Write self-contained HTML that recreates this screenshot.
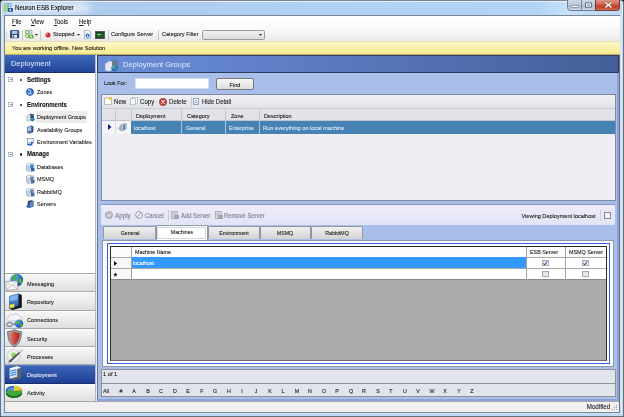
<!DOCTYPE html>
<html><head><meta charset="utf-8"><title>Neuron ESB Explorer</title>
<style>
html,body{margin:0;padding:0;}
body{width:624px;height:417px;overflow:hidden;background:#111;font-family:"Liberation Sans",sans-serif;font-size:6.1px;color:#1a1a1a;position:relative;}
.a{position:absolute;box-sizing:border-box;}
.t,.r,.c{-webkit-text-stroke:.1px currentColor;}
.t{position:absolute;white-space:nowrap;line-height:8px;height:8px;transform-origin:0 50%;}
.r{position:absolute;white-space:nowrap;line-height:8px;height:8px;transform-origin:100% 50%;}
.c{position:absolute;white-space:nowrap;line-height:8px;height:8px;width:100px;text-align:center;transform-origin:50% 50%;}
svg{position:absolute;overflow:visible;}
</style></head><body><div id="w" style="position:absolute;left:0;top:0;width:624px;height:417px;will-change:transform;">
<svg width="0" height="0" style="left:0;top:0"><defs><radialGradient id="gl" cx=".35" cy=".3" r=".8"><stop offset="0" stop-color="#7db8f4"/><stop offset=".55" stop-color="#2a6fd2"/><stop offset="1" stop-color="#123a8a"/></radialGradient></defs></svg>
<div class="a" style="left:0px;top:0px;width:624px;height:417px;background:linear-gradient(90deg,#b9d4f1 0,#adcbec 17%,#b1d2f3 50%,#b3d4f5 86%,#c6e0fa 91%,#bfdaf6 100%);border:1px solid #6a7078;border-top-color:#80848a;border-radius:3px 3px 1.5px 1.5px;"></div>
<div class="a" style="left:1px;top:1px;width:622px;height:415px;border:1px solid rgba(235,245,255,.85);border-radius:2.5px 2.5px 1px 1px;"></div>
<div class="a" style="left:1px;top:16px;width:3px;height:397px;background:linear-gradient(90deg,#c4dcf5,#dcebfb 50%,#b9d2ee);"></div>
<div class="a" style="left:620px;top:16px;width:3px;height:397px;background:linear-gradient(90deg,#c4dcf5,#e0eefc 50%,#b4cbe6);"></div>
<div class="a" style="left:1px;top:413px;width:622px;height:3px;background:linear-gradient(#c9e0f8,#bdd8f4);"></div>
<div class="a" style="left:6px;top:2.5px;width:84px;height:10.5px;background:rgba(255,255,255,.62);border-radius:5px;filter:blur(3.5px);"></div>
<svg style="left:0;top:0" width="624" height="417" viewBox="0 0 624 417"><circle cx="6.300" cy="5.700" r="1.700" fill="none" stroke="#8ccc58" stroke-width="1.300"/><circle cx="6" cy="9.400" r="1.600" fill="none" stroke="#8ccc58" stroke-width="1.300"/><circle cx="9.500" cy="5.200" r="1.600" fill="none" stroke="#7ea6e6" stroke-width="1.200"/><rect x="7.900" y="8" width="5" height="3.800" fill="#1f5a96"/><rect x="9.500" y="8.800" width="1.500" height="2.400" fill="#c9d8ea"/></svg>
<div class="t" style="left:15px;top:3.60px;font-size:6.6px;color:#000;transform:scaleX(0.93);">Neuron ESB Explorer</div>
<div class="a" style="left:566.9px;top:-1px;width:53.6px;height:11.6px;border:1px solid #6f7b8e;border-radius:0 0 3.5px 3.5px;background:linear-gradient(#cbd7e5 0,#bccadc 45%,#a9b9cf 50%,#b9c8db 85%,#d5e0ec 100%);"></div>
<div class="a" style="left:581px;top:0px;width:1px;height:10px;background:#7a8698;"></div>
<div class="a" style="left:594.6px;top:-1px;width:25.9px;height:11.6px;border:1px solid #7a3a34;border-radius:0 0 3.5px 0;background:linear-gradient(#dc9484 0,#cf6a55 42%,#c3452c 50%,#c4482f 80%,#d67a60 100%);"></div>
<svg style="left:0;top:0" width="624" height="417" viewBox="0 0 624 417"><rect x="571.400" y="5.400" width="6.800" height="2.100" rx=".5" fill="#fff" stroke="#5a6476" stroke-width=".6"/><rect x="585.600" y="2.900" width="6" height="4.300" fill="#eef2f7" stroke="#4e5868" stroke-width=".8"/><rect x="587.300" y="4.400" width="2.600" height="1.500" fill="#8a96a8"/><path d="M605.700 2.800l5.400 4.300M611.100 2.800l-5.400 4.300" stroke="#5a2620" stroke-width="2.400" stroke-linecap="round" opacity=".55"/><path d="M605.700 2.800l5.400 4.300M611.100 2.800l-5.400 4.300" stroke="#fff" stroke-width="1.400" stroke-linecap="round"/></svg>
<div class="a" style="left:3.6px;top:15px;width:616.6px;height:398.4px;background:#f0f0f0;border:1px solid #7c8794;border-right-color:#6c727c;"></div>
<div class="a" style="left:5px;top:16px;width:614.5px;height:25px;background:linear-gradient(#ffffff 0,#fbfbfb 45%,#f1f1f1 80%,#e8e8e8 100%);"></div>
<div class="t" style="left:12px;top:17.70px;font-size:6.3px;color:#1a1a1a;transform:scaleX(0.95);"><u>F</u>ile</div>
<div class="t" style="left:31px;top:17.70px;font-size:6.3px;color:#1a1a1a;transform:scaleX(0.95);"><u>V</u>iew</div>
<div class="t" style="left:54px;top:17.70px;font-size:6.3px;color:#1a1a1a;transform:scaleX(0.95);"><u>T</u>ools</div>
<div class="t" style="left:79px;top:17.70px;font-size:6.3px;color:#1a1a1a;transform:scaleX(0.95);"><u>H</u>elp</div>
<div class="a" style="left:6.3px;top:30px;width:1px;height:1px;background:#b4bcc6;"></div>
<div class="a" style="left:6.3px;top:32px;width:1px;height:1px;background:#b4bcc6;"></div>
<div class="a" style="left:6.3px;top:34px;width:1px;height:1px;background:#b4bcc6;"></div>
<div class="a" style="left:6.3px;top:36px;width:1px;height:1px;background:#b4bcc6;"></div>
<div class="a" style="left:6.3px;top:38px;width:1px;height:1px;background:#b4bcc6;"></div>
<svg style="left:10px;top:29.8px" width="9.2" height="8.4" viewBox="0 0 9.2 8.4"><rect x=".4" y=".4" width="8.400" height="7.600" rx=".8" fill="#24457c" stroke="#162c54" stroke-width=".6"/><rect x="1.800" y=".9" width="5.600" height="3.200" fill="#a9c4e6"/><rect x="2.200" y="5" width="4.800" height="2.800" fill="#e9edf3"/><rect x="2.800" y="5.600" width="1.400" height="1.800" fill="#24457c"/></svg>
<div class="a" style="left:21.5px;top:29.5px;width:1px;height:10px;background:#c8c8c8;"></div>
<svg style="left:0;top:0" width="624" height="417" viewBox="0 0 624 417"><circle cx="27.300" cy="32.200" r="1.700" fill="none" stroke="#86c450" stroke-width="1.300"/><circle cx="27" cy="36" r="1.500" fill="none" stroke="#86c450" stroke-width="1.200"/><circle cx="30.400" cy="31.800" r="1.600" fill="none" stroke="#9ab4d8" stroke-width="1.200"/><rect x="28.600" y="34.600" width="4.800" height="3.800" fill="#5fa83c"/><rect x="30.200" y="35.400" width="1.500" height="2.200" fill="#e4f2dc"/></svg>
<svg style="left:34.5px;top:34px" width="3" height="2" viewBox="0 0 3 2"><path d="M0 0h3L1.5 1.8z" fill="#222"/></svg>
<div class="a" style="left:39.5px;top:29.5px;width:1px;height:10px;background:#c8c8c8;"></div>
<svg style="left:44.5px;top:31.5px" width="6" height="6" viewBox="0 0 6 6"><circle cx="3" cy="3" r="2.5" fill="#d32a2a"/><circle cx="2.3" cy="2.2" r=".9" fill="#f08a80"/></svg>
<div class="t" style="left:53px;top:30.40px;font-size:6.2px;color:#1a1a1a;transform:scaleX(0.93);">Stopped</div>
<svg style="left:76.5px;top:34px" width="3" height="2" viewBox="0 0 3 2"><path d="M0 0h3L1.5 1.8z" fill="#222"/></svg>
<svg style="left:84px;top:30px" width="7" height="9" viewBox="0 0 7 9"><path d="M.4.4h4.2l2 2v6.2H.4z" fill="#f4f8fc" stroke="#7c8fa8" stroke-width=".6"/><circle cx="3.6" cy="5.6" r="2.1" fill="#2d6fc0"/><rect x="3.2" y="4.8" width=".9" height="2" fill="#fff"/></svg>
<svg style="left:94.5px;top:30.5px" width="10" height="8" viewBox="0 0 10 8"><rect x=".3" y=".3" width="9.4" height="7.4" fill="#1c2a1c" stroke="#555" stroke-width=".6"/><rect x="1.4" y="1.6" width="7.2" height="4.8" fill="#1f6a2a"/><rect x="2.4" y="3" width="3" height="1" fill="#9fe09f"/></svg>
<div class="a" style="left:108px;top:29.5px;width:1px;height:10px;background:#c8c8c8;"></div>
<div class="t" style="left:111px;top:30.40px;font-size:6.2px;color:#1a1a1a;transform:scaleX(0.9);">Configure Server</div>
<div class="a" style="left:157.5px;top:29.5px;width:1px;height:10px;background:#c8c8c8;"></div>
<div class="t" style="left:161.7px;top:30.40px;font-size:6.2px;color:#1a1a1a;transform:scaleX(0.9);">Category Filter</div>
<div class="a" style="left:202px;top:30px;width:62.5px;height:9.5px;background:linear-gradient(#f2f2f2,#dcdcdc);border:1px solid #9a9a9a;border-radius:1.5px;"></div>
<svg style="left:258.5px;top:34px" width="3" height="2" viewBox="0 0 3 2"><path d="M0 0h3L1.5 1.8z" fill="#111"/></svg>
<div class="a" style="left:5px;top:41px;width:614.5px;height:14px;background:linear-gradient(#fcf8cc,#f9f0a8 55%,#f4e88c);border-top:1px solid #e6e0b4;border-bottom:1px solid #b4ac68;"></div>
<div class="t" style="left:12px;top:43.80px;font-size:5.95px;color:#1a1a1a;transform:scaleX(0.95);">You are working offline. New Solution</div>
<div class="a" style="left:5px;top:55px;width:90px;height:219px;background:#fff;border-bottom:1px solid #a6a6a6;"></div>
<div class="a" style="left:5px;top:55px;width:90px;height:18px;background:linear-gradient(#3f68bb,#2f57a9 50%,#22439a);border-bottom:1px solid #182f6c;"></div>
<div class="t" style="left:11px;top:59.80px;font-size:8.0px;color:#e8eefc;transform:scaleX(0.93);-webkit-text-stroke:0;">Deployment</div>
<div class="a" style="left:8px;top:77.2px;width:5px;height:5px;border:1px solid #b4bccb;background:#fdfdfd;"></div>
<div class="a" style="left:9.5px;top:79.3px;width:2px;height:0.9px;background:#7b8aa8;"></div>
<div class="a" style="left:19.5px;top:78.7px;width:2.2px;height:2.2px;background:#222;border-radius:1.1px;"></div>
<div class="t" style="left:26.8px;top:75.70px;font-size:6.3px;color:#111;transform:scaleX(0.95);font-weight:bold;">Settings</div>
<div class="a" style="left:8px;top:102.0px;width:5px;height:5px;border:1px solid #b4bccb;background:#fdfdfd;"></div>
<div class="a" style="left:9.5px;top:104.1px;width:2px;height:0.9px;background:#7b8aa8;"></div>
<div class="a" style="left:19.5px;top:103.5px;width:2.2px;height:2.2px;background:#222;border-radius:1.1px;"></div>
<div class="t" style="left:26.8px;top:100.50px;font-size:6.3px;color:#111;transform:scaleX(0.95);font-weight:bold;">Environments</div>
<div class="a" style="left:8px;top:151.9px;width:5px;height:5px;border:1px solid #b4bccb;background:#fdfdfd;"></div>
<div class="a" style="left:9.5px;top:154.0px;width:2px;height:0.9px;background:#7b8aa8;"></div>
<div class="a" style="left:19.5px;top:153.4px;width:2.2px;height:2.2px;background:#222;border-radius:1.1px;"></div>
<div class="t" style="left:26.8px;top:150.40px;font-size:6.3px;color:#111;transform:scaleX(0.95);font-weight:bold;">Manage</div>
<div class="a" style="left:36px;top:110.8px;width:51px;height:12px;background:#ececec;"></div>
<svg style="left:26.3px;top:88.1px" width="8" height="8" viewBox="0 0 8 8"><circle cx="4" cy="4" r="3.6" fill="#2f6fc4" stroke="#1b3f80" stroke-width=".5"/><path d="M2 2.5c1-.8 2-.6 2.6.2.4.8-.4 1.4-.2 2.2.2.8 1 .8 1.4 1.6" stroke="#dff0ff" stroke-width="1" fill="none"/><circle cx="2.8" cy="5.4" r=".9" fill="#cfe6ff"/></svg>
<div class="t" style="left:36.9px;top:88.10px;font-size:6.1px;color:#1a1a1a;transform:scaleX(0.9);">Zones</div>
<svg style="left:26px;top:112.8px" width="9" height="9" viewBox="0 0 9 9"><path d="M.8 3l3-2 2.400.6v5L3.400 8.400.8 7.600z" fill="#d9dde4" stroke="#8a92a0" stroke-width=".4"/><path d="M4 .8l3.800.4v4.200L5 6.200z" fill="#1c2c58"/><path d="M4.600 1.600l2.600.3v1.200l-2.600-.2z" fill="#4a90e0"/><circle cx="6.500" cy="6.300" r="2.100" fill="#2a6fd2"/><path d="M5.200 5.600c.6-.8 1.600-.8 2-.2-.2.800-1 .6-1.300 1.300-.5.100-.8-.5-.7-1.100zM7 6.800c.5-.3 1.100 0 1.200.4-.3.600-.7.900-1.200 1z" fill="#4cb43a"/></svg>
<div class="t" style="left:36.9px;top:113.00px;font-size:6.1px;color:#1a1a1a;transform:scaleX(0.9);">Deployment Groups</div>
<svg style="left:26px;top:125.3px" width="9" height="9" viewBox="0 0 9 9"><path d="M1.400 2.200l4-1.400 1.800.8v5.200l-4 1.600L1.400 7.600z" fill="#355a94" stroke="#1d3560" stroke-width=".4"/><path d="M1.400 2.200l4-1.400v5.400l-4 1.400z" fill="#7c9cc8"/><path d="M2 3.200l2.800-1v.9L2 4.100zM2 4.800l2.800-1v.9L2 5.700z" fill="#dfe8f6"/><path d="M.6 7.200l3.400-1 2 .8-3.400 1.200z" fill="#55688c"/></svg>
<div class="t" style="left:36.9px;top:125.50px;font-size:6.1px;color:#1a1a1a;transform:scaleX(0.9);">Availability Groups</div>
<svg style="left:26px;top:138px" width="9" height="8" viewBox="0 0 9 8"><rect x="1.6" y=".6" width="5.6" height="4.4" fill="#eef3fa" stroke="#6d7f9a" stroke-width=".6"/><path d="M.6 5.8h5l1.4 1.6H2z" fill="#2a62c8"/><path d="M5 3.4l3 1.4-3 1.4z" fill="#2a62c8"/></svg>
<div class="t" style="left:36.9px;top:138.00px;font-size:6.1px;color:#1a1a1a;transform:scaleX(0.9);">Environment Variables</div>
<svg style="left:26px;top:162.6px" width="9" height="9" viewBox="0 0 9 9"><rect x=".5" y=".8" width="7.4" height="7.4" rx="1" fill="#eef2f8" stroke="#7f8da6" stroke-width=".6"/><rect x="1.3" y="2.200" width="2.400" height="5.200" fill="#b9c4d6"/><rect x="4.200" y="1.600" width="3.200" height="4" fill="#2f7fd8"/><rect x="5" y="5" width="3.400" height="3.200" fill="#2a62b2"/><rect x="1.300" y="1.300" width="2.400" height="1" fill="#fff"/></svg>
<div class="t" style="left:36.9px;top:162.90px;font-size:6.1px;color:#1a1a1a;transform:scaleX(0.9);">Databases</div>
<svg style="left:26px;top:175.0px" width="9" height="9" viewBox="0 0 9 9"><rect x=".5" y=".8" width="7.4" height="7.4" rx="1" fill="#eef2f8" stroke="#7f8da6" stroke-width=".6"/><rect x="1.3" y="2.200" width="2.400" height="5.200" fill="#b9c4d6"/><rect x="4.200" y="1.600" width="3.200" height="4" fill="#5f86b8"/><rect x="5" y="5" width="3.400" height="3.200" fill="#4a6a9a"/><rect x="1.300" y="1.300" width="2.400" height="1" fill="#fff"/></svg>
<div class="t" style="left:36.9px;top:175.30px;font-size:6.1px;color:#1a1a1a;transform:scaleX(0.9);">MSMQ</div>
<svg style="left:26px;top:187.5px" width="9" height="9" viewBox="0 0 9 9"><rect x=".5" y=".8" width="7.4" height="7.4" rx="1" fill="#eef2f8" stroke="#7f8da6" stroke-width=".6"/><rect x="1.3" y="2.200" width="2.400" height="5.200" fill="#b9c4d6"/><rect x="4.200" y="1.600" width="3.200" height="4" fill="#5f86b8"/><rect x="5" y="5" width="3.400" height="3.200" fill="#4a6a9a"/><rect x="1.300" y="1.300" width="2.400" height="1" fill="#fff"/></svg>
<div class="t" style="left:36.9px;top:187.80px;font-size:6.1px;color:#1a1a1a;transform:scaleX(0.9);">RabbitMQ</div>
<svg style="left:26px;top:200.2px" width="9" height="8" viewBox="0 0 9 8"><path d="M2 1.4l3.6-1 1.6.8v5.2l-3.6 1.2L2 6.8z" fill="#39465c" stroke="#1e2736" stroke-width=".5"/><path d="M3.6 2.2l3.6-1v5.2l-3.6 1.2z" fill="#5f86c8"/><circle cx="2.2" cy="6.2" r="1.6" fill="#2a62c8"/></svg>
<div class="t" style="left:36.9px;top:200.20px;font-size:6.1px;color:#1a1a1a;transform:scaleX(0.9);">Servers</div>
<div class="a" style="left:5px;top:274px;width:90px;height:18.3px;background:linear-gradient(#f6f6f6,#ececec 50%,#dedede);border-top:1px solid #fbfbfb;border-bottom:1px solid #a9a9a9;"></div>
<div class="t" style="left:26.8px;top:279.70px;font-size:6.1px;color:#1a1a1a;transform:scaleX(0.92);">Messaging</div>
<div class="a" style="left:5px;top:292.3px;width:90px;height:18.3px;background:linear-gradient(#f6f6f6,#ececec 50%,#dedede);border-top:1px solid #fbfbfb;border-bottom:1px solid #a9a9a9;"></div>
<div class="t" style="left:26.8px;top:298.00px;font-size:6.1px;color:#1a1a1a;transform:scaleX(0.92);">Repository</div>
<div class="a" style="left:5px;top:310.5px;width:90px;height:18.3px;background:linear-gradient(#f6f6f6,#ececec 50%,#dedede);border-top:1px solid #fbfbfb;border-bottom:1px solid #a9a9a9;"></div>
<div class="t" style="left:26.8px;top:316.20px;font-size:6.1px;color:#1a1a1a;transform:scaleX(0.92);">Connections</div>
<div class="a" style="left:5px;top:328.8px;width:90px;height:18.3px;background:linear-gradient(#f6f6f6,#ececec 50%,#dedede);border-top:1px solid #fbfbfb;border-bottom:1px solid #a9a9a9;"></div>
<div class="t" style="left:26.8px;top:334.50px;font-size:6.1px;color:#1a1a1a;transform:scaleX(0.92);">Security</div>
<div class="a" style="left:5px;top:347px;width:90px;height:18.3px;background:linear-gradient(#f6f6f6,#ececec 50%,#dedede);border-top:1px solid #fbfbfb;border-bottom:1px solid #a9a9a9;"></div>
<div class="t" style="left:26.8px;top:352.70px;font-size:6.1px;color:#1a1a1a;transform:scaleX(0.92);">Processes</div>
<div class="a" style="left:5px;top:365.3px;width:90px;height:18.3px;background:linear-gradient(#3c65b9,#2c52a6 50%,#1f4096);border-top:1px solid #5a7dc8;border-bottom:1px solid #1a2f6a;"></div>
<div class="t" style="left:26.8px;top:370.80px;font-size:6.1px;color:#e6ecfb;transform:scaleX(0.92);">Deployment</div>
<div class="a" style="left:5px;top:383.5px;width:90px;height:18.3px;background:linear-gradient(#f6f6f6,#ececec 50%,#dedede);border-top:1px solid #fbfbfb;border-bottom:1px solid #a9a9a9;"></div>
<div class="t" style="left:26.8px;top:389.20px;font-size:6.1px;color:#1a1a1a;transform:scaleX(0.92);">Activity</div>
<svg style="left:0;top:0" width="624" height="417" viewBox="0 0 624 417"><defs><linearGradient id="sh" x1="0" x2="1"><stop offset="0" stop-color="#e4847c"/><stop offset=".5" stop-color="#cf4840"/><stop offset="1" stop-color="#9c2a26"/></linearGradient><linearGradient id="rp" x1="0" y1="0" x2="0" y2="1"><stop offset="0" stop-color="#6aa4e8"/><stop offset="1" stop-color="#2458a8"/></linearGradient></defs><circle cx="16.7" cy="280" r="6.3" fill="url(#gl)"/><path d="M12.500 276.500c1.500-1.500 3.500-1.800 4.800-.8.800 1 .2 2.200-1 2.800-1.200.5-1.500 1.800-2.800 1.800-1.200-.3-1.800-2.300-1-3.800zM18.500 279c1.300-.8 3-.3 3.800 1 .3 1.800-.7 3.500-2.200 4-1-.8-.8-2-1.600-3z" fill="#4cae3c"/><path d="M5.700 281.500l11.600-.7.600 8.700-11.600.8z" fill="#f3f3f3" stroke="#8c8c8c" stroke-width=".6"/><path d="M5.900 281.700l6 4.300 5.300-5M6.500 290l4.300-4.200M17.700 289.300l-4.500-4" fill="none" stroke="#9d9d9d" stroke-width=".5"/><path d="M9 296.200l9.500-2.600 3.300 1.400v12.400l-9.300 2.600-3.500-1.600z" fill="#16181c"/><path d="M9 296.200l9.500-2.600v12.200L9 308.600z" fill="url(#rp)"/><path d="M10 297l7.500-2v4.500l-7.500 2z" fill="#8cc0f4" opacity=".75"/><path d="M9.600 304.600l4.700-.8v3.600l-4.700.9z" fill="#ebe25e" stroke="#8a842a" stroke-width=".4"/><path d="M9.400 321c-2.500 0-3.200-3.200-.8-4 .2-2.600 3.500-3.400 5-1.700 1.600-2.400 5.600-1.800 6 1.200 2.800.1 3.400 3.800.6 4.500z" fill="#f2f4f7" stroke="#aab0ba" stroke-width=".6"/><circle cx="19" cy="323.600" r="4.200" fill="url(#gl)"/><path d="M16.500 321.800c1-1.300 2.800-1.500 3.600-.6.300 1-.6 1.600-1.400 2-.9.300-1.300 1.200-2 .8-.600-.5-.6-1.400-.2-2.200zM20.500 324c.9-.4 1.800 0 2 .8-.2 1-.8 1.800-1.700 2.200-.6-.6-.2-1.400-.7-2.100z" fill="#4cae3c"/><ellipse cx="9.500" cy="324.500" rx="3" ry="1.900" fill="none" stroke="#5b5f66" stroke-width="1"/><path d="M12.300 324h3" stroke="#5b5f66" stroke-width="1"/><path d="M7.600 331.500c3 0 5-.800 6.900-1.900 1.900 1.100 3.900 1.900 6.900 1.900 0 7.500-1.900 12.300-6.900 15.500-5-3.200-6.900-8-6.900-15.500z" fill="#9fa3aa" stroke="#4c5056" stroke-width=".7"/><path d="M9.300 333c2.200 0 3.800-.6 5.200-1.500 1.400.9 3 1.500 5.200 1.500 0 5.800-1.500 9.600-5.200 12.100-3.700-2.500-5.200-6.300-5.200-12.100z" fill="url(#sh)"/><path d="M13.500 348.800l1.300 1.500 1.900-.6.500 1.900 2 .3-.4 2 1.700 1.100-1.300 1.500 1 1.800-1.900.6-.1 2-2-.3-1 1.700-1.700-1.100-1.700 1.100-1-1.700-2 .3-.1-2-1.900-.6 1-1.800-1.300-1.500 1.700-1.100-.4-2 2-.3.500-1.900 1.900.6z" fill="#eef0f2" stroke="#b4b8be" stroke-width=".5"/><circle cx="13.500" cy="354.700" r="2.300" fill="#7cc83a"/><circle cx="13" cy="354.100" r=".9" fill="#c6ee9a"/><path d="M21.800 349.600l.9 1-11.600 11.200-2.800 1 1.200-2.600z" fill="#4f535a"/><path d="M18.500 351.500l2.500-2.300 1.600 1.500-2.600 2.400z" fill="#d9dce0"/><path d="M9.600 368.400l7.600-2.200 4 1.500v10.400l-7.800 2.500-3.800-1.900z" fill="#59616e"/><path d="M9.600 368.400l7.600-2.200v10.600l-7.600 2z" fill="#dce7f6"/><path d="M9.600 368.400l7.600-2.200 4 1.500-7.800 2.200z" fill="#f4f7fb"/><path d="M10.400 370.400l6-1.500v1.300l-6 1.500zM10.400 372.700l6-1.500v1.300l-6 1.500zM10.400 375l6-1.500v1.300l-6 1.500z" fill="#3a8ae2"/><path d="M13.400 369.900v10.700l-3.800-1.900v-10.300z" fill="#b9c8de" opacity=".0"/><ellipse cx="14" cy="393.200" rx="8.200" ry="4.900" fill="#1f6a22"/><ellipse cx="14" cy="391" rx="8.200" ry="4.900" fill="#3daa3c"/><path d="M14 391L6.300 389.300C6.900 386.700 10.500 385.800 14 386.100z" fill="#5a96e0"/><path d="M5.800 391c0-2.800 3.600-5 8.200-4.900v1.500c-3.400 0-5.800 1-6.700 2.800-.9 2-.5 4.300-.5 4.300-.8-1.200-1-2.500-1-3.700z" fill="#2f6cc4"/><path d="M14 391v-4.900c4.200-.1 7.400 1.500 8.100 3.500z" fill="#e9c93c"/><path d="M14 391l8.100-1.400c.1.500.1 1 0 1.400z" fill="#c59f20"/></svg>
<div class="a" style="left:95px;top:55px;width:3px;height:346.5px;background:#e9ebf0;border-left:1px solid #b4b9c4;"></div>
<div class="a" style="left:97.3px;top:55px;width:521.7px;height:345.8px;background:#aabeea;border-left:1px solid #64759e;border-right:2.600px solid #8ca3da;border-bottom:2.600px solid #8ca3da;"></div>
<div class="a" style="left:97.3px;top:55px;width:521.7px;height:18.4px;background:linear-gradient(90deg,#698cd6 0,#6486d0 20%,#5573b6 58%,#445f98 100%);border:1px solid #2b3b62;"></div>
<svg style="left:0;top:0" width="624" height="417" viewBox="0 0 624 417"><path d="M105.200 63.500l4.600-2.600 2.600.7v8.200l-3.600 1.500-3.600-.9z" fill="#e3e6ec" stroke="#a6adba" stroke-width=".4"/><path d="M109.800 60.900l3.400-1.500 4.200.7v7l-5 2.300v-8.800z" fill="#5c6474"/><path d="M109.800 60.900l3.400-1.500 4.200.7-5 1.500z" fill="#3a94d4"/><path d="M112.400 61.600l5-1.500v7l-5 2.300z" fill="#6f7788"/><circle cx="114.400" cy="68" r="3.100" fill="url(#gl)"/><path d="M112.600 66.800c.8-1.100 2.200-1.200 2.900-.4-.2 1-1.300.9-1.700 1.800-.7.200-1.300-.6-1.200-1.400zM115.300 68.600c.7-.4 1.600-.1 1.800.6-.3.800-.9 1.400-1.700 1.600-.3-.7.200-1.500-.1-2.200z" fill="#4cb43a"/></svg>
<div class="t" style="left:122.8px;top:60.60px;font-size:8.1px;color:#e4ebfa;transform:scaleX(0.93);-webkit-text-stroke:0;">Deployment Groups</div>
<div class="t" style="left:104.4px;top:78.70px;font-size:5.9px;color:#1a1a1a;transform:scaleX(0.92);">Look For:</div>
<div class="a" style="left:135px;top:78.3px;width:74px;height:11.2px;background:#fff;border:1px solid #d5dcec;"></div>
<div class="a" style="left:216px;top:78.4px;width:38.3px;height:12.1px;background:linear-gradient(#f5f5f5,#ebebeb 50%,#dedede);border:1px solid #787878;border-radius:2px;"></div>
<div class="c" style="left:184.9px;top:80.50px;font-size:5.9px;color:#1a1a1a;transform:scaleX(0.95);">Find</div>
<div class="a" style="left:101.2px;top:94px;width:514.8px;height:107.4px;background:#eeeef4;border:1px solid #7f89a6;"></div>
<div class="a" style="left:102.2px;top:95px;width:512.8px;height:14px;background:linear-gradient(#f1f1f4,#e2e3e8);border-bottom:1px solid #c9ccd4;"></div>
<svg style="left:103.5px;top:97px" width="8" height="8" viewBox="0 0 8 8"><rect x=".4" y="1" width="7" height="6.400" fill="#fffef2" stroke="#9a9a8a" stroke-width=".6"/><circle cx="6.600" cy="1.400" r="1.500" fill="#f2b632"/></svg>
<div class="t" style="left:114px;top:97.80px;font-size:6.6px;color:#1a1a1a;transform:scaleX(0.92);">New</div>
<svg style="left:130.4px;top:97px" width="8" height="8" viewBox="0 0 8 8"><rect x="2.400" y=".4" width="5" height="6" fill="#fff" stroke="#9aa3b0" stroke-width=".6"/><rect x=".4" y="1.800" width="5" height="6" fill="#f6f8fb" stroke="#9aa3b0" stroke-width=".6"/></svg>
<div class="t" style="left:140px;top:97.80px;font-size:6.6px;color:#1a1a1a;transform:scaleX(0.92);">Copy</div>
<svg style="left:159px;top:97.6px" width="8" height="8" viewBox="0 0 8 8"><circle cx="4" cy="4" r="3.700" fill="#cc3b36" stroke="#8c4a46" stroke-width=".6"/><path d="M2.400 2.400l3.200 3.200M5.600 2.400L2.400 5.600" stroke="#fff" stroke-width="1.100"/></svg>
<div class="t" style="left:168.7px;top:97.80px;font-size:6.6px;color:#1a1a1a;transform:scaleX(0.92);">Delete</div>
<div class="a" style="left:191px;top:96.5px;width:1px;height:10.5px;background:#c4c8d0;"></div>
<svg style="left:193.3px;top:98px" width="6" height="7" viewBox="0 0 6 7"><rect x=".4" y=".4" width="5.200" height="6.200" fill="#f4f7fc" stroke="#6f87b5" stroke-width=".7"/><path d="M1.600 3.600L3 2.200l1.400 1.400M1.600 5.400L3 4l1.400 1.400" fill="none" stroke="#4668a8" stroke-width=".6"/></svg>
<div class="t" style="left:201.7px;top:97.80px;font-size:6.6px;color:#1a1a1a;transform:scaleX(0.9);">Hide Detail</div>
<div class="a" style="left:102.2px;top:109px;width:512.8px;height:11.7px;background:#e1e3e8;border-bottom:1px solid #c0c4cc;"></div>
<div class="a" style="left:115px;top:109px;width:1px;height:11.7px;background:#c2c6ce;"></div>
<div class="a" style="left:130.6px;top:109px;width:1px;height:11.7px;background:#c2c6ce;"></div>
<div class="a" style="left:181px;top:109px;width:1px;height:11.7px;background:#c2c6ce;"></div>
<div class="a" style="left:225.2px;top:109px;width:1px;height:11.7px;background:#c2c6ce;"></div>
<div class="a" style="left:259.2px;top:109px;width:1px;height:11.7px;background:#c2c6ce;"></div>
<div class="t" style="left:136px;top:111.50px;font-size:6.0px;color:#1a1a1a;transform:scaleX(0.92);">Deployment</div>
<div class="t" style="left:187px;top:111.50px;font-size:6.0px;color:#1a1a1a;transform:scaleX(0.92);">Category</div>
<div class="t" style="left:230.7px;top:111.50px;font-size:6.0px;color:#1a1a1a;transform:scaleX(0.92);">Zone</div>
<div class="t" style="left:264.3px;top:111.50px;font-size:6.0px;color:#1a1a1a;transform:scaleX(0.92);">Description</div>
<div class="a" style="left:102.2px;top:120.7px;width:28.8px;height:13px;background:#f4f4f6;"></div>
<div class="a" style="left:131px;top:120.7px;width:484px;height:13px;background:#4682b4;"></div>
<div class="a" style="left:181px;top:120.7px;width:1px;height:13px;background:#a9c3dc;"></div>
<div class="a" style="left:225.2px;top:120.7px;width:1px;height:13px;background:#a9c3dc;"></div>
<div class="a" style="left:259.2px;top:120.7px;width:1px;height:13px;background:#a9c3dc;"></div>
<div class="a" style="left:115px;top:120.7px;width:1px;height:13px;background:#d6d8de;"></div>
<svg style="left:107.5px;top:123.8px" width="3.6" height="6" viewBox="0 0 3.6 6"><path d="M0 0l3.500 3L0 6z" fill="#1a1f8c"/></svg>
<svg style="left:118px;top:123.2px" width="9.5" height="8.5" viewBox="0 0 9.5 8.5"><path d="M.8 5.600L3.600 1.400l4.600-.8v5.400L3.600 8z" fill="#c6cad2" stroke="#6e7480" stroke-width=".5"/><path d="M3.600 1.400v6.600L.8 5.600z" fill="#9ea4ae"/><path d="M5.200 2l1.800-.4v4.800l-1.800.7z" fill="#3a82d8"/></svg>
<div class="t" style="left:134.3px;top:124.10px;font-size:5.95px;color:#d9e7f5;transform:scaleX(0.92);">localhost</div>
<div class="t" style="left:186px;top:124.10px;font-size:5.95px;color:#d9e7f5;transform:scaleX(0.92);">General</div>
<div class="t" style="left:228.9px;top:124.10px;font-size:5.95px;color:#d9e7f5;transform:scaleX(0.92);">Enterprise</div>
<div class="t" style="left:263px;top:124.10px;font-size:6.1px;color:#d9e7f5;transform:scaleX(0.92);">Run everything on local machine</div>
<div class="a" style="left:101.2px;top:204.3px;width:514px;height:20.7px;background:linear-gradient(#ececfb,#e3e3f7);border-top:1px solid #8296c8;border-radius:0 0 1.5px 1.5px;"></div>
<svg style="left:104.9px;top:211.4px" width="8" height="8" viewBox="0 0 8 8"><circle cx="4" cy="4" r="3.600" fill="#bdbdc2" stroke="#94949a" stroke-width=".6"/><path d="M2.200 4.100l1.400 1.400 2.300-2.800" stroke="#f4f4f6" stroke-width="1" fill="none"/></svg>
<div class="t" style="left:115px;top:211.50px;font-size:6.8px;color:#7d7d86;transform:scaleX(0.92);">Apply</div>
<svg style="left:134.9px;top:211.4px" width="8" height="8" viewBox="0 0 8 8"><circle cx="4" cy="4" r="3.400" fill="#f1f1f5" stroke="#94949a" stroke-width=".9"/><path d="M1.700 6.300l4.600-4.600" stroke="#94949a" stroke-width=".9"/></svg>
<div class="t" style="left:145px;top:211.50px;font-size:6.5px;color:#7d7d86;transform:scaleX(0.92);">Cancel</div>
<div class="a" style="left:167.7px;top:210.2px;width:1px;height:10.5px;background:#c6c6d6;"></div>
<svg style="left:171.4px;top:211.4px" width="8" height="8" viewBox="0 0 8 8"><rect x=".4" y=".4" width="5.800" height="7" fill="#dcdce0" stroke="#94949a" stroke-width=".6"/><path d="M1.400 2h3.600M1.400 3.600h3.600M1.400 5.200h2" stroke="#a6a6ac" stroke-width=".6"/><rect x="3.800" y="4.200" width="3.800" height="3.600" fill="#a4a4ac" stroke="#8a8a90" stroke-width=".4"/></svg>
<div class="t" style="left:181px;top:211.50px;font-size:6.5px;color:#7d7d86;transform:scaleX(0.9);">Add Server</div>
<svg style="left:215px;top:211.4px" width="8" height="8" viewBox="0 0 8 8"><rect x=".4" y=".4" width="5.800" height="7" fill="#dcdce0" stroke="#94949a" stroke-width=".6"/><path d="M1.400 2h3.600M1.400 3.600h3.600M1.400 5.200h2" stroke="#a6a6ac" stroke-width=".6"/><rect x="3.800" y="4.200" width="3.800" height="3.600" fill="#a4a4ac" stroke="#8a8a90" stroke-width=".4"/></svg>
<div class="t" style="left:224.4px;top:211.50px;font-size:6.5px;color:#7d7d86;transform:scaleX(0.9);">Remove Server</div>
<div class="r" style="right:28px;top:211.50px;font-size:6.05px;color:#1a1a1a;transform:scaleX(0.92);">Viewing Deployment localhost</div>
<div class="a" style="left:599.8px;top:210px;width:1px;height:10.5px;background:#d0d0e0;"></div>
<div class="a" style="left:603.5px;top:211.8px;width:7px;height:7px;border:1.800px solid #8a8a8e;background:#f4f4f8;"></div>
<div class="a" style="left:103.4px;top:226.1px;width:52.5px;height:13.4px;background:linear-gradient(#f0f0f0,#e2e2e2 50%,#d3d3d3);border:1px solid #8e98a8;border-bottom:none;border-radius:1.5px 1.5px 0 0;"></div>
<div class="c" style="left:79.65px;top:229.20px;font-size:5.7px;color:#1a1a1a;transform:scaleX(0.92);">General</div>
<div class="a" style="left:207.5px;top:226.1px;width:52px;height:13.4px;background:linear-gradient(#f0f0f0,#e2e2e2 50%,#d3d3d3);border:1px solid #8e98a8;border-bottom:none;border-radius:1.5px 1.5px 0 0;"></div>
<div class="c" style="left:183.5px;top:229.20px;font-size:5.7px;color:#1a1a1a;transform:scaleX(0.92);">Environment</div>
<div class="a" style="left:259.5px;top:226.1px;width:51.5px;height:13.4px;background:linear-gradient(#f0f0f0,#e2e2e2 50%,#d3d3d3);border:1px solid #8e98a8;border-bottom:none;border-radius:1.5px 1.5px 0 0;"></div>
<div class="c" style="left:235.25px;top:229.20px;font-size:5.7px;color:#1a1a1a;transform:scaleX(0.92);">MSMQ</div>
<div class="a" style="left:311px;top:226.1px;width:51.5px;height:13.4px;background:linear-gradient(#f0f0f0,#e2e2e2 50%,#d3d3d3);border:1px solid #8e98a8;border-bottom:none;border-radius:1.5px 1.5px 0 0;"></div>
<div class="c" style="left:286.75px;top:229.20px;font-size:5.7px;color:#1a1a1a;transform:scaleX(0.92);">RabbitMQ</div>
<div class="a" style="left:102.4px;top:239.5px;width:511.2px;height:127px;background:#fbfbfd;border:1px solid #8e98a8;"></div>
<div class="a" style="left:155.5px;top:225px;width:52.5px;height:15px;background:#fff;border:1px solid #8e98a8;border-bottom:none;border-radius:1.5px 1.5px 0 0;"></div>
<div class="a" style="left:157.1px;top:226.6px;width:49.3px;height:12px;border:1px solid #d4d8de;"></div>
<div class="c" style="left:131.75px;top:228.00px;font-size:5.7px;color:#1a1a1a;transform:scaleX(0.92);">Machines</div>
<div class="a" style="left:107.4px;top:242.7px;width:502.6px;height:121.3px;border:1.600px solid #3a5ce0;background:#fff;"></div>
<div class="a" style="left:110.3px;top:246px;width:496.7px;height:114.6px;border:1px solid #2a2a2a;border-bottom-color:#6c6c6c;background:#ababab;"></div>
<div class="a" style="left:111.3px;top:247px;width:494.7px;height:10.7px;background:#fbfbfb;border-bottom:1px solid #a8a8a8;"></div>
<div class="a" style="left:111.3px;top:257.7px;width:494.7px;height:11.1px;background:#fff;border-bottom:1px solid #a8a8a8;"></div>
<div class="a" style="left:111.3px;top:268.8px;width:494.7px;height:11.1px;background:#fff;border-bottom:1px solid #8a8a8a;"></div>
<div class="a" style="left:131.7px;top:257.4px;width:394.5px;height:11px;background:#3399ff;"></div>
<div class="a" style="left:130.7px;top:247px;width:1px;height:32.9px;background:#a2a2a2;"></div>
<div class="a" style="left:526.2px;top:247px;width:1px;height:32.9px;background:#a2a2a2;"></div>
<div class="a" style="left:564.9px;top:247px;width:1px;height:32.9px;background:#a2a2a2;"></div>
<div class="a" style="left:111.3px;top:257.7px;width:19.4px;height:22.2px;background:#f8f8f8;"></div>
<div class="a" style="left:111.3px;top:268.3px;width:19.4px;height:1px;background:#a8a8a8;"></div>
<div class="a" style="left:111.3px;top:279px;width:19.4px;height:0.9px;background:#8a8a8a;"></div>
<div class="t" style="left:135px;top:248.20px;font-size:5.8px;color:#1a1a1a;transform:scaleX(0.92);">Machine Name</div>
<div class="t" style="left:530px;top:248.20px;font-size:5.85px;color:#1a1a1a;transform:scaleX(0.92);">ESB Server</div>
<div class="t" style="left:568.7px;top:248.20px;font-size:5.85px;color:#1a1a1a;transform:scaleX(0.92);">MSMQ Server</div>
<div class="t" style="left:133.2px;top:259.30px;font-size:5.8px;color:#fff;transform:scaleX(0.92);">localhost</div>
<svg style="left:114px;top:261.2px" width="3.5" height="5" viewBox="0 0 3.5 5"><path d="M0 0l3.200 2.400L0 4.800z" fill="#111"/></svg>
<div class="t" style="left:113.7px;top:272.00px;font-size:8.5px;color:#111;transform:scaleX(1);font-weight:bold;">*</div>
<div class="a" style="left:542.3px;top:259.8px;width:6.4px;height:6.4px;background:linear-gradient(135deg,#d6d9de,#f6f7f9);border:1px solid #a4aab4;"></div>
<svg style="left:543.3px;top:260.6px" width="4.4" height="4.8" viewBox="0 0 4.4 4.8"><path d="M.500 2.400l1.300 1.600L4 .4" fill="none" stroke="#2a3c8c" stroke-width="1"/></svg>
<div class="a" style="left:582.1999999999999px;top:259.8px;width:6.4px;height:6.4px;background:linear-gradient(135deg,#d6d9de,#f6f7f9);border:1px solid #a4aab4;"></div>
<svg style="left:583.1999999999999px;top:260.6px" width="4.4" height="4.8" viewBox="0 0 4.4 4.8"><path d="M.500 2.400l1.300 1.600L4 .4" fill="none" stroke="#2a3c8c" stroke-width="1"/></svg>
<div class="a" style="left:542.3px;top:271.0px;width:6.4px;height:6.4px;background:linear-gradient(135deg,#d6d9de,#f6f7f9);border:1px solid #a4aab4;"></div>
<div class="a" style="left:582.1999999999999px;top:271.0px;width:6.4px;height:6.4px;background:linear-gradient(135deg,#d6d9de,#f6f7f9);border:1px solid #a4aab4;"></div>
<div class="a" style="left:101.2px;top:369px;width:515.2px;height:14.4px;background:#e1e4ea;border:1px solid #8e9096;border-bottom:none;"></div>
<div class="t" style="left:103.4px;top:370.30px;font-size:6px;color:#1a1a1a;transform:scaleX(0.95);">1 of 1</div>
<div class="a" style="left:101.2px;top:383px;width:515.2px;height:14.4px;background:#e1e4ea;border:1px solid #8e9096;"></div>
<div class="c" style="left:55.7px;top:386.90px;font-size:5.6px;color:#1a1a1a;transform:scaleX(0.95);">All</div>
<div class="c" style="left:71px;top:386.90px;font-size:5.6px;color:#1a1a1a;transform:scaleX(0.95);">#</div>
<div class="c" style="left:84.30000000000001px;top:386.90px;font-size:5.6px;color:#1a1a1a;transform:scaleX(0.95);">A</div>
<div class="c" style="left:97.82000000000002px;top:386.90px;font-size:5.6px;color:#1a1a1a;transform:scaleX(0.95);">B</div>
<div class="c" style="left:111.34px;top:386.90px;font-size:5.6px;color:#1a1a1a;transform:scaleX(0.95);">C</div>
<div class="c" style="left:124.86000000000001px;top:386.90px;font-size:5.6px;color:#1a1a1a;transform:scaleX(0.95);">D</div>
<div class="c" style="left:138.38px;top:386.90px;font-size:5.6px;color:#1a1a1a;transform:scaleX(0.95);">E</div>
<div class="c" style="left:151.9px;top:386.90px;font-size:5.6px;color:#1a1a1a;transform:scaleX(0.95);">F</div>
<div class="c" style="left:165.42000000000002px;top:386.90px;font-size:5.6px;color:#1a1a1a;transform:scaleX(0.95);">G</div>
<div class="c" style="left:178.94px;top:386.90px;font-size:5.6px;color:#1a1a1a;transform:scaleX(0.95);">H</div>
<div class="c" style="left:192.46px;top:386.90px;font-size:5.6px;color:#1a1a1a;transform:scaleX(0.95);">I</div>
<div class="c" style="left:205.98000000000002px;top:386.90px;font-size:5.6px;color:#1a1a1a;transform:scaleX(0.95);">J</div>
<div class="c" style="left:219.5px;top:386.90px;font-size:5.6px;color:#1a1a1a;transform:scaleX(0.95);">K</div>
<div class="c" style="left:233.01999999999998px;top:386.90px;font-size:5.6px;color:#1a1a1a;transform:scaleX(0.95);">L</div>
<div class="c" style="left:246.54000000000002px;top:386.90px;font-size:5.6px;color:#1a1a1a;transform:scaleX(0.95);">M</div>
<div class="c" style="left:260.06px;top:386.90px;font-size:5.6px;color:#1a1a1a;transform:scaleX(0.95);">N</div>
<div class="c" style="left:273.58000000000004px;top:386.90px;font-size:5.6px;color:#1a1a1a;transform:scaleX(0.95);">O</div>
<div class="c" style="left:287.1px;top:386.90px;font-size:5.6px;color:#1a1a1a;transform:scaleX(0.95);">P</div>
<div class="c" style="left:300.62px;top:386.90px;font-size:5.6px;color:#1a1a1a;transform:scaleX(0.95);">Q</div>
<div class="c" style="left:314.14px;top:386.90px;font-size:5.6px;color:#1a1a1a;transform:scaleX(0.95);">R</div>
<div class="c" style="left:327.65999999999997px;top:386.90px;font-size:5.6px;color:#1a1a1a;transform:scaleX(0.95);">S</div>
<div class="c" style="left:341.18px;top:386.90px;font-size:5.6px;color:#1a1a1a;transform:scaleX(0.95);">T</div>
<div class="c" style="left:354.7px;top:386.90px;font-size:5.6px;color:#1a1a1a;transform:scaleX(0.95);">U</div>
<div class="c" style="left:368.22px;top:386.90px;font-size:5.6px;color:#1a1a1a;transform:scaleX(0.95);">V</div>
<div class="c" style="left:381.74px;top:386.90px;font-size:5.6px;color:#1a1a1a;transform:scaleX(0.95);">W</div>
<div class="c" style="left:395.26px;top:386.90px;font-size:5.6px;color:#1a1a1a;transform:scaleX(0.95);">X</div>
<div class="c" style="left:408.78000000000003px;top:386.90px;font-size:5.6px;color:#1a1a1a;transform:scaleX(0.95);">Y</div>
<div class="c" style="left:422.3px;top:386.90px;font-size:5.6px;color:#1a1a1a;transform:scaleX(0.95);">Z</div>
<div class="a" style="left:4.6px;top:401px;width:614.6px;height:11.4px;background:#f1efef;border-top:1px solid #a8a8a8;"></div>
<div class="r" style="right:13.700000000000045px;top:403.30px;font-size:6.4px;color:#1a1a1a;transform:scaleX(0.97);">Modified</div>
<div class="a" style="left:612px;top:409px;width:1px;height:1px;background:#9a9a9a;"></div>
<div class="a" style="left:614px;top:409px;width:1px;height:1px;background:#9a9a9a;"></div>
<div class="a" style="left:616px;top:409px;width:1px;height:1px;background:#9a9a9a;"></div>
<div class="a" style="left:614px;top:407px;width:1px;height:1px;background:#9a9a9a;"></div>
<div class="a" style="left:616px;top:407px;width:1px;height:1px;background:#9a9a9a;"></div>
<div class="a" style="left:616px;top:405px;width:1px;height:1px;background:#9a9a9a;"></div>
</div></body></html>
